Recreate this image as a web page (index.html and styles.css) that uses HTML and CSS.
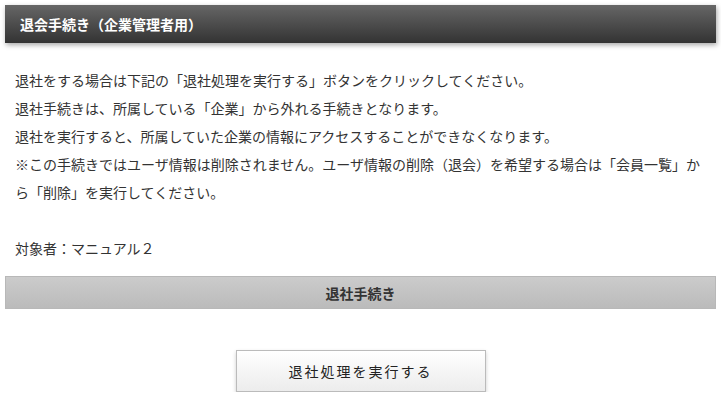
FILE: index.html
```html
<!DOCTYPE html>
<html lang="ja">
<head>
<meta charset="utf-8">
<link rel="stylesheet" href="styles.css">
</head>
<body>
<div class="page">
  <h1 class="title">退会手続き（企業管理者用）</h1>
  <div class="content">
    <p class="desc">退社をする場合は下記の「退社処理を実行する」ボタンをクリックしてください。<br>退社手続きは、所属している「企業」から外れる手続きとなります。<br>退社を実行すると、所属していた企業の情報にアクセスすることができなくなります。<br>※この手続きではユーザ情報は削除されません。ユーザ情報の削除（退会）を希望する場合は「会員一覧」から「削除」を実行してください。<br><br>対象者：マニュアル２</p>
  </div>
  <div class="section">退社手続き</div>
  <div class="actions">
    <button class="btn" type="button">退社処理を実行する</button>
  </div>
</div>
</body>
</html>
```
FILE: styles.css
```css
html, body {
  margin: 0;
  padding: 0;
  background: #fff;
}
body {
  font-family: "Noto Sans CJK JP", "Noto Sans", sans-serif;
  color: #333;
  font-size: 14px;
}
.page {
  padding: 5px 5px 0;
}
.title {
  margin: 0;
  height: 38px;
  box-sizing: border-box;
  padding: 0 15px;
  display: flex;
  align-items: center;
  font-size: 14px;
  font-weight: bold;
  color: #fff;
  background: linear-gradient(#666, #333);
  box-shadow: 1px 2px 5px rgba(0, 0, 0, 0.35);
}
.content {
  padding: 23px 10px 0;
}
.desc {
  margin: 0;
  line-height: 28px;
}
.section {
  margin-top: 14px;
  height: 33px;
  box-sizing: border-box;
  border: 1px solid #b8b8b8;
  background: linear-gradient(#cbcbcb, #bbb);
  display: flex;
  align-items: center;
  justify-content: center;
  font-weight: bold;
  color: #333;
}
.actions {
  display: flex;
  justify-content: center;
  padding-top: 41px;
}
.btn {
  width: 250px;
  height: 42px;
  border: 1px solid #bbb;
  border-radius: 0;
  background: linear-gradient(#fff, #ececec);
  box-shadow: 0 2px 4px rgba(0, 0, 0, 0.2);
  font-family: inherit;
  font-size: 14px;
  letter-spacing: 2px;
  color: #222;
  padding: 0;
  cursor: pointer;
}
```
